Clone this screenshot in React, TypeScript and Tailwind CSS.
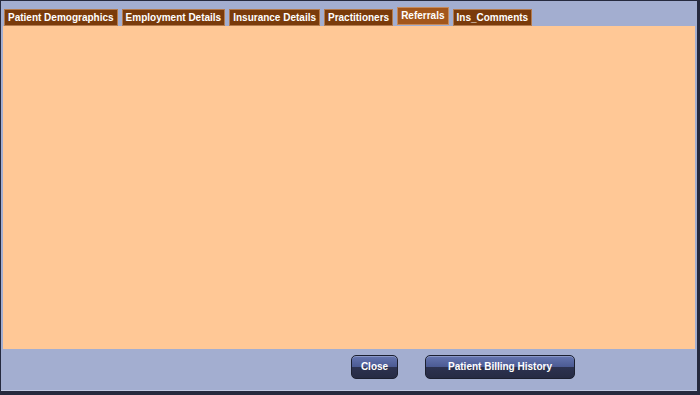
const tabs = [
  "Patient Demographics",
  "Employment Details",
  "Insurance Details",
  "Practitioners",
  "Referrals",
  "Ins_Comments",
];

const Tab = ({ label, active }: { label: string; active?: boolean }) => (
  <div
    className={
      active
        ? "mb-[1px] h-[18px] px-[3px] border border-[#c58a5c] bg-[#a3561b] text-[10px] leading-[15px] font-bold text-white"
        : "h-[17px] px-[3px] border border-[#b47a4c] bg-[#7a3b0b] text-[10px] leading-[15px] font-bold text-white"
    }
  >
    {label}
  </div>
);

const NavButton = ({ label, width }: { label: string; width: string }) => (
  <button
    className={`${width} h-[24px] rounded-[5px] border border-[#1c2030] bg-[linear-gradient(to_bottom,#6676b0_0%,#4c5b94_48%,#2c3250_52%,#262b44_100%)] shadow-[inset_0_1px_0_#8a98c8] text-[10px] font-bold text-white`}
  >
    {label}
  </button>
);

export default function App() {
  return (
    <div
      className="w-[700px] h-[395px] flex flex-col bg-[#a3aed0] border-t border-l border-r-[3px] border-b-[4px] border-[#262a3e]"
      style={{ fontFamily: "'Liberation Sans', Arial, sans-serif" }}
    >
      <div className="flex items-end gap-[4px] pl-[3px] pt-[6px] pr-[2px]">
        {tabs.map((t) => (
          <Tab key={t} label={t} active={t === "Referrals"} />
        ))}
      </div>

      <div className="flex-1 ml-[2px] mr-[2px] bg-[#ffc896]" />

      <div className="h-[42px] flex items-center pl-[350px] gap-[27px] pb-[6px] border-b border-[#c3cbe3]">
        <NavButton label="Close" width="w-[47px]" />
        <NavButton label="Patient Billing History" width="w-[150px]" />
      </div>
    </div>
  );
}
